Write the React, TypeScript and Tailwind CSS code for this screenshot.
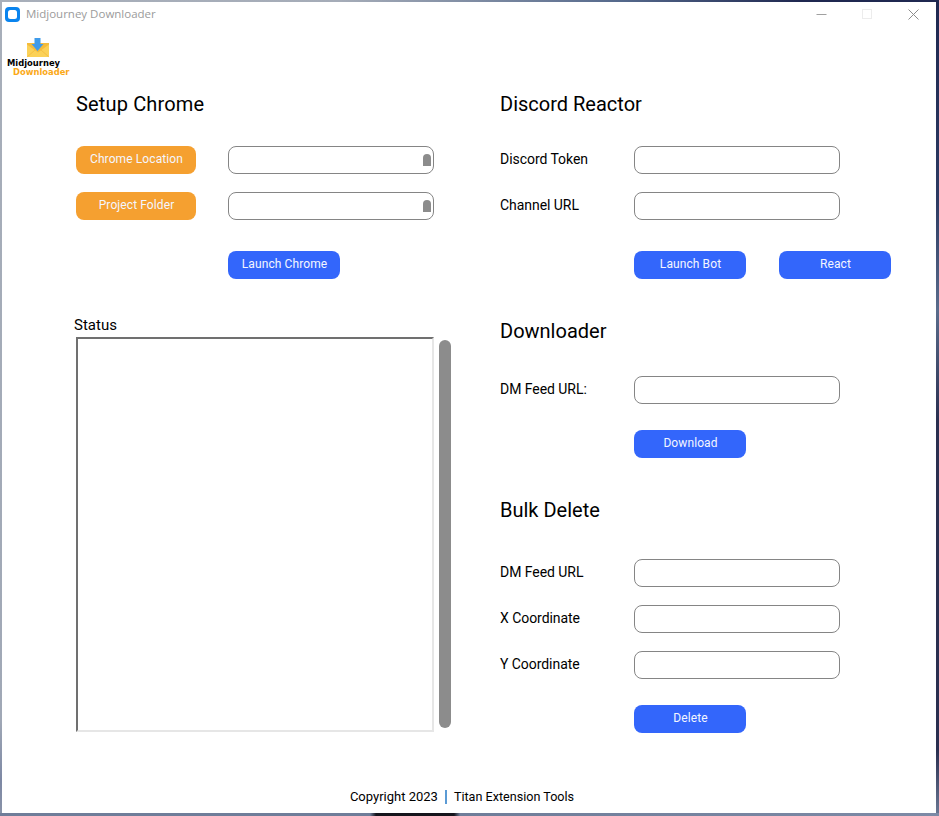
const labelFont = "font-['Roboto',sans-serif]";

function Heading({ children, className = "" }: { children: React.ReactNode; className?: string }) {
  return <h2 className={`h-6 text-[20px] leading-6 text-black ${className}`}>{children}</h2>;
}

function Btn({ children, color = "blue", className = "" }: { children: React.ReactNode; color?: "blue" | "orange"; className?: string }) {
  const widthColor = color === "blue" ? "w-[112px] bg-[#3366fb]" : "w-[120px] bg-[#f5a030]";
  return (
    <button className={`h-7 shrink-0 rounded-[8px] pb-[2px] pl-[1px] text-[12px] leading-[26px] tracking-[0.1px] text-[#f4f6ff] ${widthColor} ${className}`}>
      {children}
    </button>
  );
}

function Field({ handle = false }: { handle?: boolean }) {
  return (
    <div className="relative h-7 w-[206px] shrink-0 rounded-[8px] border border-[#858585] bg-white">
      {handle && <div className="absolute right-[2px] top-[7px] h-3 w-2 rounded-t-[4px] bg-[#8c8c8c]" />}
    </div>
  );
}

function LabelRow({ label, className = "" }: { label: string; className?: string }) {
  return (
    <div className={`flex h-7 items-center ${className}`}>
      <span className="w-[134px] pb-[2px] text-[14px] leading-[18px] tracking-[-0.05px] text-black">{label}</span>
      <Field />
    </div>
  );
}

function Logo() {
  return (
    <div className="relative ml-[3px] mt-[9px] h-[44px] w-[68px]">
      <svg width="68" height="24" viewBox="0 0 68 24" className="block">
        <path d="M22 8 H44 V20 a1 1 0 0 1 -1 1 H23 a1 1 0 0 1 -1 -1 Z" fill="#fbd158" />
        <path d="M22 8.5 L33 16.5 L44 8.5 V7 H22 Z" fill="#f4bb3c" />
        <path d="M22 21 L30 14 M44 21 L36 14" stroke="#eeb136" strokeWidth="0.6" fill="none" />
        <path d="M29.5 2 H35.5 V8 H38.5 L32.5 15 L26.5 8 H29.5 Z" fill="#3f9bea" />
      </svg>
      <div className="absolute left-[2px] top-[22px] whitespace-nowrap font-['DejaVu_Sans',sans-serif] text-[8.4px] font-bold leading-[10px] text-black">Midjourney</div>
      <div className="absolute left-[8px] top-[31px] whitespace-nowrap font-['DejaVu_Sans',sans-serif] text-[8.4px] font-bold leading-[10px] text-[#fba918]">Downloader</div>
    </div>
  );
}

export default function App() {
  return (
    <div className="h-[816px] w-[939px] overflow-hidden pb-[3px] pl-[2px] pr-[3px] pt-[2px] [background:linear-gradient(to_right,#a8afba_0px,#a5acb8_340px,#55698c_620px,#1f2850_800px,#1f2850_939px)_top/100%_2px_no-repeat,linear-gradient(to_right,#6f7d99_0px,#6f7d99_370px,#15151c_376px,#15151c_454px,#6f7d99_460px,#7d8aa6_939px)_bottom/100%_3px_no-repeat,linear-gradient(to_bottom,#a8afba_0px,#a0a8b6_720px,#7d88a4_780px,#8a93a8_816px)_left/2px_100%_no-repeat,linear-gradient(to_bottom,#1f2850_0px,#2c3a62_200px,#5a6c8c_310px,#2a2f50_420px,#2a2f50_750px,#6c7a96_816px)_right/3px_100%_no-repeat]">
      <div className={`flex h-full w-full flex-col bg-white ${labelFont}`}>
        {/* title bar */}
        <div className="flex h-[25px] shrink-0 items-center pb-[1px]">
          <div className="ml-[3px] flex h-[15px] w-[15px] items-center justify-center rounded-[4px] bg-[#0a84ee]">
            <div className="h-[9px] w-[9px] rounded-[2.5px] bg-white" />
          </div>
          <span className="ml-[6px] font-['Open_Sans',sans-serif] text-[11.5px] leading-4 text-[#9b9b9b]">Midjourney Downloader</span>
          <div className="ml-auto flex items-center pr-[17px]">
            <svg width="11" height="11" viewBox="0 0 11 11"><path d="M0.5 5.5H10.5" stroke="#a0a0a0" /></svg>
            <svg width="11" height="11" viewBox="0 0 11 11" className="ml-[35px]"><rect x="0.5" y="0.5" width="9" height="9" fill="none" stroke="#ececec" /></svg>
            <svg width="11" height="11" viewBox="0 0 11 11" className="ml-[35px]"><path d="M0.5 0.5L10.5 10.5M10.5 0.5L0.5 10.5" stroke="#8c8c8c" /></svg>
          </div>
        </div>

        <Logo />

        <div className="ml-[74px] mt-[12px] flex">
          {/* left column */}
          <div className="w-[375px]">
            <Heading className="tracking-[0.15px]">Setup Chrome</Heading>
            <div className="mt-[30px] flex gap-8">
              <Btn color="orange">Chrome Location</Btn>
              <Field handle />
            </div>
            <div className="mt-[18px] flex gap-8">
              <Btn color="orange">Project Folder</Btn>
              <Field handle />
            </div>
            <Btn className="ml-[152px] mt-[31px] block">Launch Chrome</Btn>
            <div className="-ml-[2px] mt-[37px] text-[15px] leading-[18px] text-black">Status</div>
            <div className="mt-[3px] flex items-start gap-[5px]">
              <div className="h-[395px] w-[358px] border-2 border-b-[#e6e6e6] border-l-[#707070] border-r-[#e6e6e6] border-t-[#707070] bg-white" />
              <div className="mt-[3px] h-[388px] w-3 rounded-[6px] bg-[#8c8c8c]" />
            </div>
          </div>

          {/* right column */}
          <div className="ml-[49px]">
            <Heading>Discord Reactor</Heading>
            <LabelRow label="Discord Token" className="mt-[30px]" />
            <LabelRow label="Channel URL" className="mt-[18px]" />
            <div className="ml-[134px] mt-[31px] flex gap-[33px]">
              <Btn>Launch Bot</Btn>
              <Btn>React</Btn>
            </div>

            <div className="mt-[40px]"><Heading>Downloader</Heading></div>
            <LabelRow label="DM Feed URL:" className="mt-[33px]" />
            <Btn className="ml-[134px] mt-[26px] block">Download</Btn>

            <div className="mt-[40px]"><Heading>Bulk Delete</Heading></div>
            <LabelRow label="DM Feed URL" className="mt-[37px]" />
            <LabelRow label="X Coordinate" className="mt-[18px]" />
            <LabelRow label="Y Coordinate" className="mt-[18px]" />
            <Btn className="ml-[134px] mt-[26px] block">Delete</Btn>
          </div>
        </div>

        {/* footer */}
        <div className="mt-[55px] flex h-[18px] items-center justify-center pr-[14px] text-[13px] leading-[18px] text-black">
          <span>Copyright 2023</span>
          <span className="mx-[7px] h-[14px] w-[2px] bg-[#5b9bd5]" />
          <span className="text-[12.6px]">Titan Extension Tools</span>
        </div>
      </div>
    </div>
  );
}
